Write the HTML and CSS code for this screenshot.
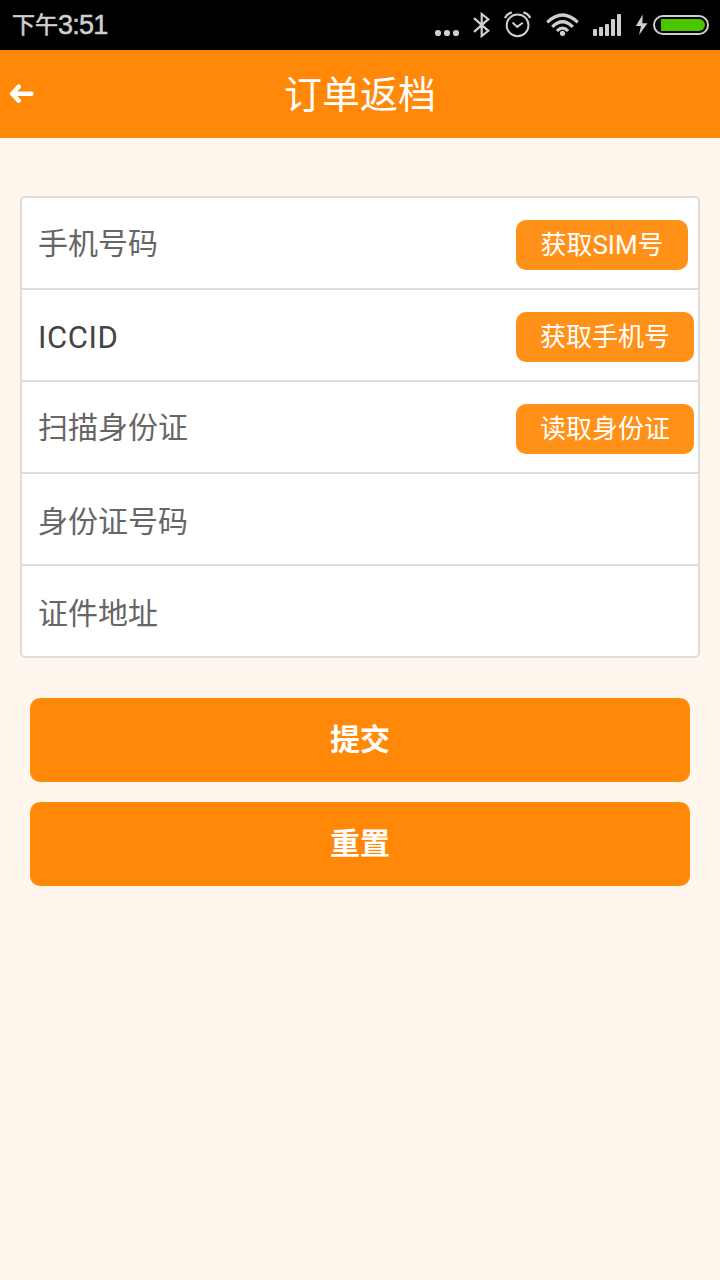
FILE: index.html
```
<!DOCTYPE html>
<html lang="zh-CN">
  <head>
    <meta charset="UTF-8" />
    <title>订单返档</title>
    <link rel="stylesheet" href="styles.css">
  </head>
  <body>
    <div class="status-bar">
      <div class="time"><span class="ampm">下午</span><span class="clock">3:51</span></div>
      <svg class="status-icons" width="290" height="50" viewBox="430 0 290 50">
        <g fill="#cfcfcf">
          <circle cx="438" cy="33" r="3.1" />
          <circle cx="447" cy="33" r="3.1" />
          <circle cx="456" cy="33" r="3.1" />
        </g>
        <!-- 蓝牙 -->
        <path d="M474 18.2L488.3 30.8L481.7 36V14L488.3 19.2L474 31.8" fill="none" stroke="#cfcfcf" stroke-width="2.2" />
        <!-- 闹钟 -->
        <g fill="none" stroke="#cfcfcf" stroke-width="2">
          <circle cx="517.6" cy="25.3" r="10.9" />
          <path d="M512.6 22.6L517.2 26.9L522.8 22.8" />
          <path d="M505 18Q507 13.8 511.8 12.4M530.2 18Q528.2 13.8 523.4 12.4" stroke-width="2.3" />
        </g>
        <!-- wifi -->
        <g fill="none" stroke="#cfcfcf" stroke-width="3.2">
          <path d="M547.3 22.3Q562.5 7.7 577.7 22.3" />
          <path d="M552.2 26.9Q562.5 16.7 572.8 26.9" />
          <path d="M556.9 31Q562.5 25.2 568.1 31" />
        </g>
        <circle cx="562.5" cy="33.3" r="2.6" fill="#cfcfcf" />
        <!-- 信号 -->
        <g fill="#cfcfcf">
          <rect x="593" y="29" width="4" height="7" rx="1" />
          <rect x="599" y="27" width="4" height="9" rx="1" />
          <rect x="605" y="24" width="4" height="12" rx="1" />
          <rect x="611" y="19" width="4" height="17" rx="1" />
          <rect x="617" y="14" width="4" height="22" rx="1" />
        </g>
        <!-- 电池 -->
        <path d="M642.8 14.5L635.8 26H641L639 35L647.5 23.2H642.3Z" fill="#cfcfcf" />
        <rect x="654" y="16" width="54" height="18" rx="9" fill="none" stroke="#cfcfcf" stroke-width="2" />
        <path d="M661 19H699A6 6 0 0 1 699 31H661Z" fill="#4ac600" />
      </svg>
    </div>
    <div class="header">
      <a class="btn-back">
        <svg width="24" height="20" viewBox="0 0 24 20">
          <path d="M8.7 2.7L2.2 9.7L8.7 16.7M3 9.7H21.4" fill="none" stroke="#fff" stroke-width="4.5" stroke-linecap="round" stroke-linejoin="round" />
        </svg>
      </a>
      <h1>订单返档</h1>
    </div>
    <div class="content">
      <ul class="form-list">
        <li><span class="label">手机号码</span><button class="btn-get sim">获取SIM号</button></li>
        <li><span class="label dark">ICCID</span><button class="btn-get">获取手机号</button></li>
        <li><span class="label">扫描身份证</span><button class="btn-get">读取身份证</button></li>
        <li><span class="label low">身份证号码</span></li>
        <li><span class="label low">证件地址</span></li>
      </ul>
      <div class="btn-wrap">
        <button class="btn-main">提交</button>
        <button class="btn-main">重置</button>
      </div>
    </div>
  </body>
</html>
```
FILE: styles.css
```
* {
  box-sizing: border-box;
}
html,
body,
ul,
li,
h1 {
  margin: 0;
  padding: 0;
  list-style: none;
}
body {
  min-height: 100vh;
  font-family: Roboto, "Noto Sans CJK SC", sans-serif;
  background: #fff6ed;
}
button {
  padding: 0;
  border: 0;
  font-family: inherit;
  color: #fff;
  cursor: pointer;
}
.status-bar {
  display: flex;
  justify-content: space-between;
  height: 50px;
  background: #000;
}
.time {
  display: flex;
  padding-left: 12px;
  line-height: 50px;
  color: #cfcfcf;
}
.ampm {
  padding-top: 1px;
  font-size: 23px;
  -webkit-text-stroke: 0.6px #cfcfcf;
}
.clock {
  font-family: "Liberation Sans", sans-serif;
  font-size: 27px;
  letter-spacing: -0.8px;
  -webkit-text-stroke: 0.5px #cfcfcf;
}
.header {
  display: grid;
  grid-template-columns: 60px 1fr 60px;
  align-items: center;
  height: 88px;
  background: #ff8809;
}
.btn-back {
  padding: 0 0 1px 10px;
}
.btn-back svg {
  display: block;
}
.header h1 {
  padding-top: 2px;
  font-size: 38px;
  font-weight: normal;
  line-height: 86px;
  text-align: center;
  color: #fff;
}
.content {
  padding: 58px 20px 0;
}
.form-list {
  border: 2px solid #ddd;
  border-radius: 5px;
  background: #fff;
}
.form-list li {
  display: flex;
  justify-content: space-between;
  height: 92px;
  padding: 0 4px 0 16px;
  border-bottom: 2px solid #ddd;
}
.form-list li:last-child {
  height: 90px;
  border-bottom: 0;
}
.label {
  padding-top: 1px;
  font-size: 30px;
  line-height: 90px;
  color: #666;
}
.label.dark {
  padding-top: 3px;
  font-size: 31px;
  letter-spacing: 0.6px;
  color: #444;
}
.label.low {
  padding-top: 3px;
}
.btn-get {
  width: 178px;
  height: 50px;
  margin-top: 22px;
  border-radius: 10px;
  font-size: 26px;
  line-height: 50px;
  background: #ff9018;
}
.btn-get.sim {
  width: 172px;
  margin-right: 6px;
}
.btn-wrap {
  display: flex;
  flex-direction: column;
  gap: 20px;
  padding: 40px 10px 0;
}
.btn-main {
  height: 84px;
  border-radius: 10px;
  font-size: 30px;
  font-weight: bold;
  line-height: 84px;
  background: #ff8809;
}
```
